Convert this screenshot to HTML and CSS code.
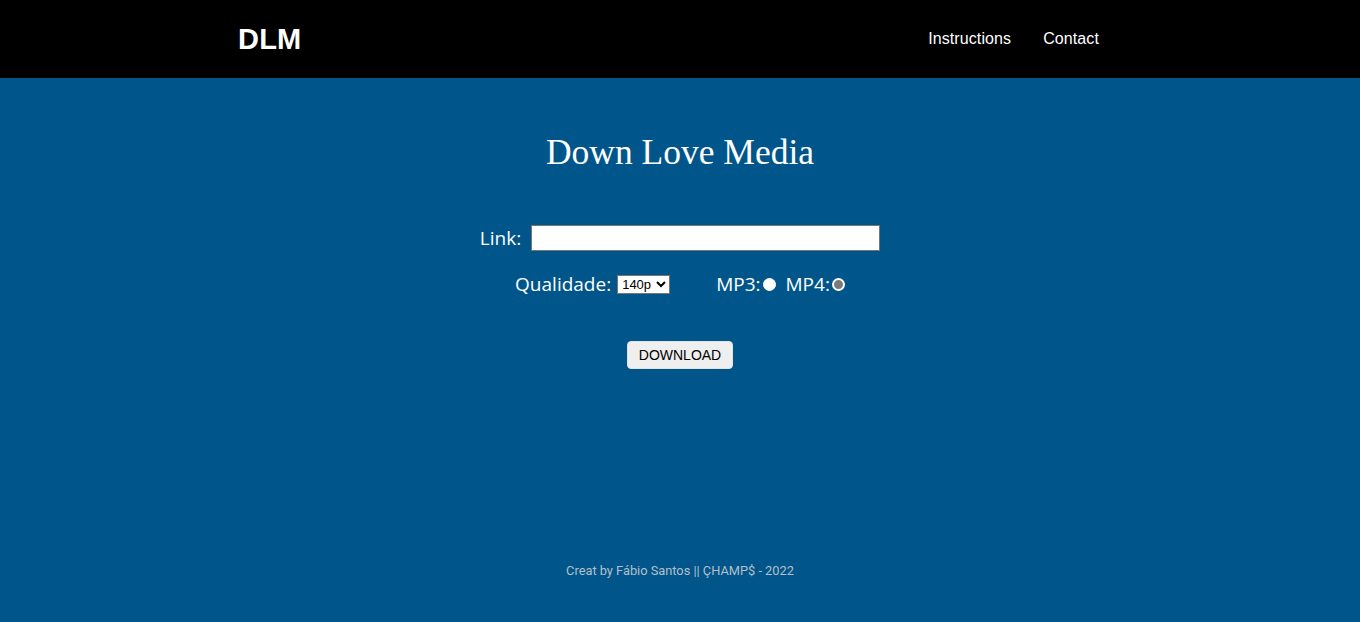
FILE: index.html
```html
<!DOCTYPE html>
<html lang="pt">
<head>
<meta charset="utf-8">
<title>DLM - Down Love Media</title>
<link rel="stylesheet" href="styles.css">
</head>
<body>
<header class="topbar">
  <div class="brand">DLM</div>
  <nav class="nav">
    <a href="#" class="nav-link">Instructions</a>
    <a href="#" class="nav-link">Contact</a>
  </nav>
</header>
<main class="main">
  <h1 class="title">Down Love Media</h1>
  <form class="form">
    <div class="row row-link">
      <label class="label" for="link">Link:</label>
      <input class="text-input" id="link" type="text">
    </div>
    <div class="row row-options">
      <label class="label" for="q">Qualidade:</label>
      <select class="select" id="q">
        <option>140p</option>
        <option>360p</option>
        <option>720p</option>
      </select>
      <span class="formats">
        <label class="label" for="mp3">MP3:</label>
        <input class="radio radio-mp3" type="radio" name="fmt" id="mp3">
        <label class="label label-mp4" for="mp4">MP4:</label>
        <input class="radio radio-mp4" type="radio" name="fmt" id="mp4">
      </span>
    </div>
    <div class="row row-button">
      <button class="btn" type="button">DOWNLOAD</button>
    </div>
  </form>
  <footer class="footer">Creat by Fábio Santos || ÇHAMP$ - 2022</footer>
</main>
</body>
</html>
```
FILE: styles.css
```css
* { box-sizing: border-box; }
html, body { margin: 0; padding: 0; }
body {
  background: #00568a;
  font-family: "Open Sans", Roboto, "Liberation Sans", Arial, sans-serif;
  color: #fff;
  height: 622px;
  overflow: hidden;
}
.topbar {
  height: 78px;
  background: #000;
  display: flex;
  align-items: center;
  justify-content: space-between;
  padding: 0 261px 0 238px;
}
.brand {
  font-family: "Liberation Sans", Arial, sans-serif;
  font-weight: 700;
  font-size: 29px;
  color: #fff;
  letter-spacing: 0.2px;
}
.nav { display: flex; gap: 32px; }
.nav-link {
  font-family: "Liberation Sans", Arial, sans-serif;
  font-size: 16px;
  color: #fff;
  text-decoration: none;
  letter-spacing: 0.1px;
}
.main {
  display: flex;
  flex-direction: column;
  align-items: center;
}
.title {
  font-family: "Liberation Serif", "Times New Roman", serif;
  font-weight: 400;
  font-size: 35.5px;
  margin: 52px 0 0;
  line-height: 44px;
}
.form {
  display: flex;
  flex-direction: column;
  align-items: center;
  margin-top: 51px;
}
.row { display: flex; align-items: center; }
.label { font-size: 19px; color: #fff; line-height: 24px; }
.row-link { gap: 10px; height: 26px; }
.text-input {
  width: 349px;
  height: 26px;
  border: 1px solid #767676;
  background: #fff;
  padding: 0 4px;
}
.row-options { margin-top: 21px; height: 24px; }
.select {
  margin-left: 6px;
  width: 53px;
  height: 19px;
  font-family: "Liberation Sans", Arial, sans-serif;
  font-size: 13px;
  padding: 0;
  border: 1px solid #767676;
  background: #fff;
  color: #000;
}
.formats { display: flex; align-items: center; margin-left: 46px; }
.radio {
  appearance: none;
  -webkit-appearance: none;
  margin: 0 0 0 2px;
  width: 13px;
  height: 13px;
  border-radius: 50%;
}
.radio-mp3 { background: #fff; border: 1px solid #fff; }
.radio-mp4 { background: #7a7a7a; border: 2px solid #fff; }
.label-mp4 { margin-left: 10px; }
.row-button { margin-top: 45px; }
.btn {
  width: 106px;
  height: 28px;
  background: #efefef;
  border: 1px solid #e2e2e2;
  border-radius: 4px;
  font-family: "Liberation Sans", Arial, sans-serif;
  font-size: 14px;
  color: #000;
  padding: 0;
}
.footer {
  margin-top: 194px;
  font-family: Roboto, "Liberation Sans", Arial, sans-serif;
  font-size: 12.8px;
  color: #b6bfca;
}
```
